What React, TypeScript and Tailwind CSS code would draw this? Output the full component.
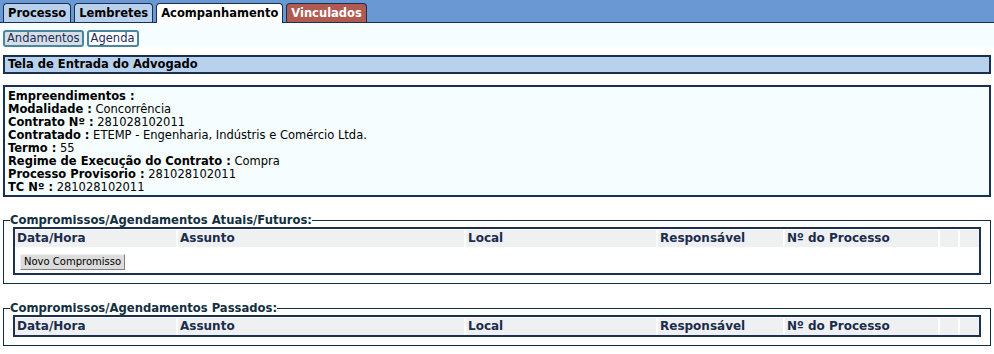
const tabs = [
  { label: 'Processo', active: false, red: false },
  { label: 'Lembretes', active: false, red: false },
  { label: 'Acompanhamento', active: true, red: false },
  { label: 'Vinculados', active: false, red: true },
];

const info: [string, string][] = [
  ['Empreendimentos :', ''],
  ['Modalidade :', 'Concorrência'],
  ['Contrato Nº :', '281028102011'],
  ['Contratado :', 'ETEMP - Engenharia, Indústris e Comércio Ltda.'],
  ['Termo :', '55'],
  ['Regime de Execução do Contrato :', 'Compra'],
  ['Processo Provisorio :', '281028102011'],
  ['TC Nº :', '281028102011'],
];

const cols = ['Data/Hora', 'Assunto', 'Local', 'Responsável', 'Nº do Processo', '', ''];

function HeaderRow() {
  return (
    <div className="grid grid-cols-[161px_288px_192px_127px_155px_20px_1fr] bg-[#eef0f2] h-[17px] font-bold text-[12px] text-[#1c2c4c]">
      {cols.map((c, i) => (
        <div key={i} className={`px-[2px] leading-[17px] whitespace-nowrap ${i > 0 ? 'border-l-2 border-white' : ''}`}>
          {c}
        </div>
      ))}
    </div>
  );
}

function Section({ title, children }: { title: string; children?: React.ReactNode }) {
  return (
    <fieldset className="mx-[3px] border border-[#123040] px-[9px] pt-0 pb-[8px]">
      <legend className="font-bold text-[11.6px] text-[#123040] ml-[-3px] px-0 leading-[14px]">{title}</legend>
      <div className="border-2 border-[#1c3050] pt-px">
        <HeaderRow />
        {children}
      </div>
    </fieldset>
  );
}

export default function App() {
  return (
    <div className="w-[994px] h-[354px] bg-white font-['DejaVu_Sans',Verdana,sans-serif] text-[11.5px] text-black overflow-hidden">
      {/* top tabs */}
      <div className="h-[23px] bg-[#6a98d2] border-b border-[#1a3050] flex items-end gap-[3px] px-[3px]">
        {tabs.map((t) => (
          <div
            key={t.label}
            className={`px-[4px] rounded-t-[4px] border border-b-0 border-[#1a3050] font-bold text-[11.5px] leading-[18px] ${
              t.active ? 'bg-white text-black -mb-px h-[20px]' : t.red ? 'bg-[#b05a52] text-white h-[19px]' : 'bg-[#b9d1ed] text-black h-[19px]'
            }`}
          >
            {t.label}
          </div>
        ))}
      </div>
      {/* sub tabs */}
      <div className="bg-[#f5fdfe] h-[24px] flex items-end gap-[3px] px-[3px]">
        <div className="h-[17px] px-[2px] rounded-[3px] border-2 border-[#4a86a4] bg-[#d6dfe6] text-[#1c2c5c] leading-[13px]">Andamentos</div>
        <div className="h-[17px] px-[2px] rounded-[3px] border-2 border-[#4a86a4] bg-white text-[#1c2c5c] leading-[13px]">Agenda</div>
      </div>
      <div className="mx-[3px] mt-[8px] h-[19px] bg-[#b8d2ee] border-2 border-[#1a3050] px-[3px] font-bold leading-[15px]">
        Tela de Entrada do Advogado
      </div>
      <div className="mx-[3px] mt-[11px] h-[112px] border-2 border-[#1a3050] bg-[#f5fdfe] pt-[3px] px-[3px]">
        {info.map(([k, v]) => (
          <div key={k} className="leading-[13px]">
            <span className="font-bold">{k}</span> {v}
          </div>
        ))}
      </div>
      <div className="mt-[16px]">
        <Section title="Compromissos/Agendamentos Atuais/Futuros:">
          <div className="h-[26px] px-[5px] pt-[6px]">
            <button className="h-[16px] px-[3px] bg-[#dcdcdc] border border-[#f0f0f0] border-r-[#808080] border-b-[#808080] text-black text-[10px] leading-[14px]">
              Novo Compromisso
            </button>
          </div>
        </Section>
      </div>
      <div className="mt-[17px]">
        <Section title="Compromissos/Agendamentos Passados:" />
      </div>
    </div>
  );
}
